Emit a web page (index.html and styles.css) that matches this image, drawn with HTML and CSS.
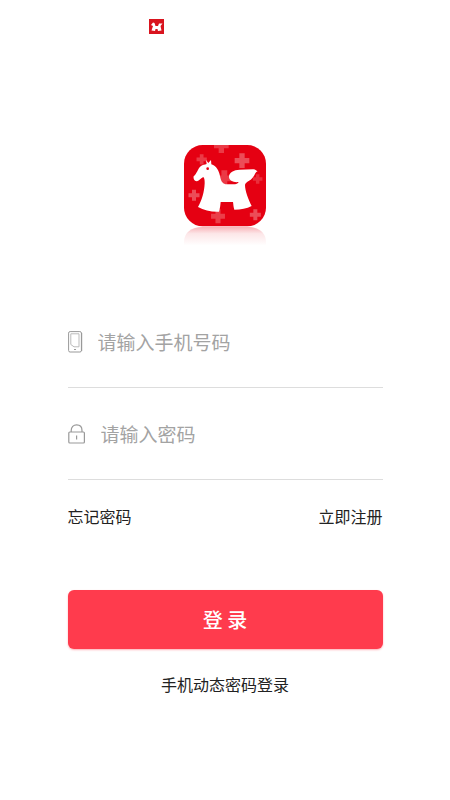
FILE: index.html
```html
<!DOCTYPE html>
<html lang="zh-CN">
<head>
<meta charset="utf-8">
<meta name="viewport" content="width=device-width, initial-scale=1">
<title>登录</title>
<link rel="stylesheet" href="styles.css">
</head>
<body>
<header class="topbar">
  <svg class="topbar-mark" viewBox="0 0 30 30" aria-hidden="true">
    <rect width="30" height="30" fill="#d9141e"/>
    <path d="M4 12L8 7L11 8L13 14H18L20 9L27 9L23 14L25 23L18 24L17 20H13L12 24L5 23L8 14Z" fill="#fff"/>
  </svg>
</header>
<main class="login">
  <svg class="logo" viewBox="26 30 246 330" aria-hidden="true">
    <defs>
      <linearGradient id="reflection" x1="0" y1="0" x2="0" y2="1">
        <stop offset="0" stop-color="#e60012" stop-opacity=".3"/>
        <stop offset=".35" stop-color="#e60012" stop-opacity=".1"/>
        <stop offset="1" stop-color="#e60012" stop-opacity="0"/>
      </linearGradient>
      <clipPath id="tile"><rect x="26" y="30" width="246" height="244" rx="56"/></clipPath>
      <path id="cross" d="M-8 -22H8V-8H22V8H8V22H-8V8H-22V-8H-8Z"/>
    </defs>
    <path d="M26 332V322C26 292 48 276 82 276H216C250 276 272 292 272 322V332Z" fill="url(#reflection)"/>
    <rect x="26" y="30" width="246" height="244" rx="56" fill="#e50012"/>
    <g clip-path="url(#tile)" fill="#ec4d58">
      <use href="#cross" transform="translate(138 32)" opacity=".75"/>
      <use href="#cross" transform="translate(200 77)"/>
      <use href="#cross" transform="translate(79 73) scale(.7)" opacity=".75"/>
      <use href="#cross" transform="translate(147 130) scale(1.1)" opacity=".75"/>
      <use href="#cross" transform="translate(247 132) scale(.65)" opacity=".6"/>
      <use href="#cross" transform="translate(56 181) scale(.75)"/>
      <use href="#cross" transform="translate(128 244) scale(.95)" opacity=".8"/>
      <use href="#cross" transform="translate(240 239) scale(.75)"/>
    </g>
    <path d="M94 87L92 75L99 84L107 75L108 88C124 94 130 106 134 123C137 140 143 148 155 148H173C183 148 188 145 190 141C174 143 162 137 161 127C160 112 175 105 193 104L234 103C240 103 244 107 247 109C238 113 240 118 233 127C225 139 211 140 209 150C209 167 219 194 229 213C214 221 197 224 177 224C174 215 174 207 173 201H136C135 211 134 221 131 230C108 231 86 226 68 216C79 197 87 171 88 145C88 137 88 130 84 126C77 129 72 137 65 139C58 139 53 132 55 124C65 116 67 101 77 93C82 89 88 89 94 87Z" fill="#fff"/>
    <circle cx="97" cy="101" r="4" fill="#e50012"/>
  </svg>
  <form class="form">
    <div class="field">
      <label for="phone" aria-label="手机号码">
        <svg class="icon icon-phone" viewBox="0 0 15 22" fill="none" stroke="#999" aria-hidden="true">
          <rect x=".6" y=".6" width="12.8" height="20.4" rx="1.5"/>
          <path d="M2.8 2.8H11V15.8H6L2.8 13.5Z" stroke="#bbb"/>
          <path d="M6 18.5H8M13.6 2V20" stroke-width="1.2"/>
        </svg>
      </label>
      <input id="phone" type="tel" placeholder="请输入手机号码">
    </div>
    <div class="field">
      <label for="password" aria-label="密码">
        <svg class="icon icon-lock" viewBox="0 0 18 20" fill="none" stroke="#999" stroke-width="1.2" aria-hidden="true">
          <rect x=".8" y="8" width="15.6" height="11" rx="1"/>
          <path d="M3.2 8V6.5C3.2 3 5.4 .8 8.6 .8S14 3 14 6.5V8M8.6 11.5V15.5"/>
        </svg>
      </label>
      <input id="password" type="password" placeholder="请输入密码">
    </div>
    <nav class="links">
      <a href="#forgot">忘记密码</a>
      <a href="#register">立即注册</a>
    </nav>
    <button class="submit" type="submit">登 录</button>
  </form>
  <a class="alternate" href="#code">手机动态密码登录</a>
</main>
</body>
</html>
```
FILE: styles.css
```css
* {
  box-sizing: border-box;
}

body {
  margin: 0;
  background: #fff;
  color: #222;
  font: 16px/24px "Noto Sans CJK SC", sans-serif;
}

a {
  color: inherit;
  text-decoration: none;
}

svg {
  display: block;
}

.topbar {
  padding: 19px 0 0 33%;
}

.topbar-mark {
  width: 15px;
  height: 15px;
}

.login {
  display: flex;
  flex-direction: column;
  align-items: center;
  padding: 111px 15% 40px;
}

.logo {
  width: 82px;
  height: 110px;
}

.form {
  width: 100%;
  margin-top: 42px;
}

.field {
  display: flex;
  align-items: center;
  gap: 15px;
  height: 92px;
  border-bottom: 1px solid #ddd;
}

.field:first-child {
  height: 91px;
}

.icon-phone {
  width: 15px;
  height: 22px;
}

.icon-lock {
  width: 18px;
  height: 20px;
}

.field input {
  flex: 1;
  min-width: 0;
  padding: 0;
  border: 0;
  outline: 0;
  background: transparent;
  color: #222;
  font: inherit;
  font-size: 19px;
  line-height: 28px;
}

.field input::placeholder {
  color: #a3a3a3;
  opacity: 1;
}

.links {
  display: flex;
  justify-content: space-between;
  margin-top: 24px;
}

.submit {
  display: block;
  width: 100%;
  height: 59px;
  margin-top: 62px;
  border: 0;
  border-radius: 6px;
  background: #ff3b4d;
  box-shadow: 0 1px 2px #ff3b4d66;
  color: #fff;
  font: inherit;
  font-size: 20px;
  font-weight: 500;
}

.alternate {
  margin-top: 23px;
}
```
